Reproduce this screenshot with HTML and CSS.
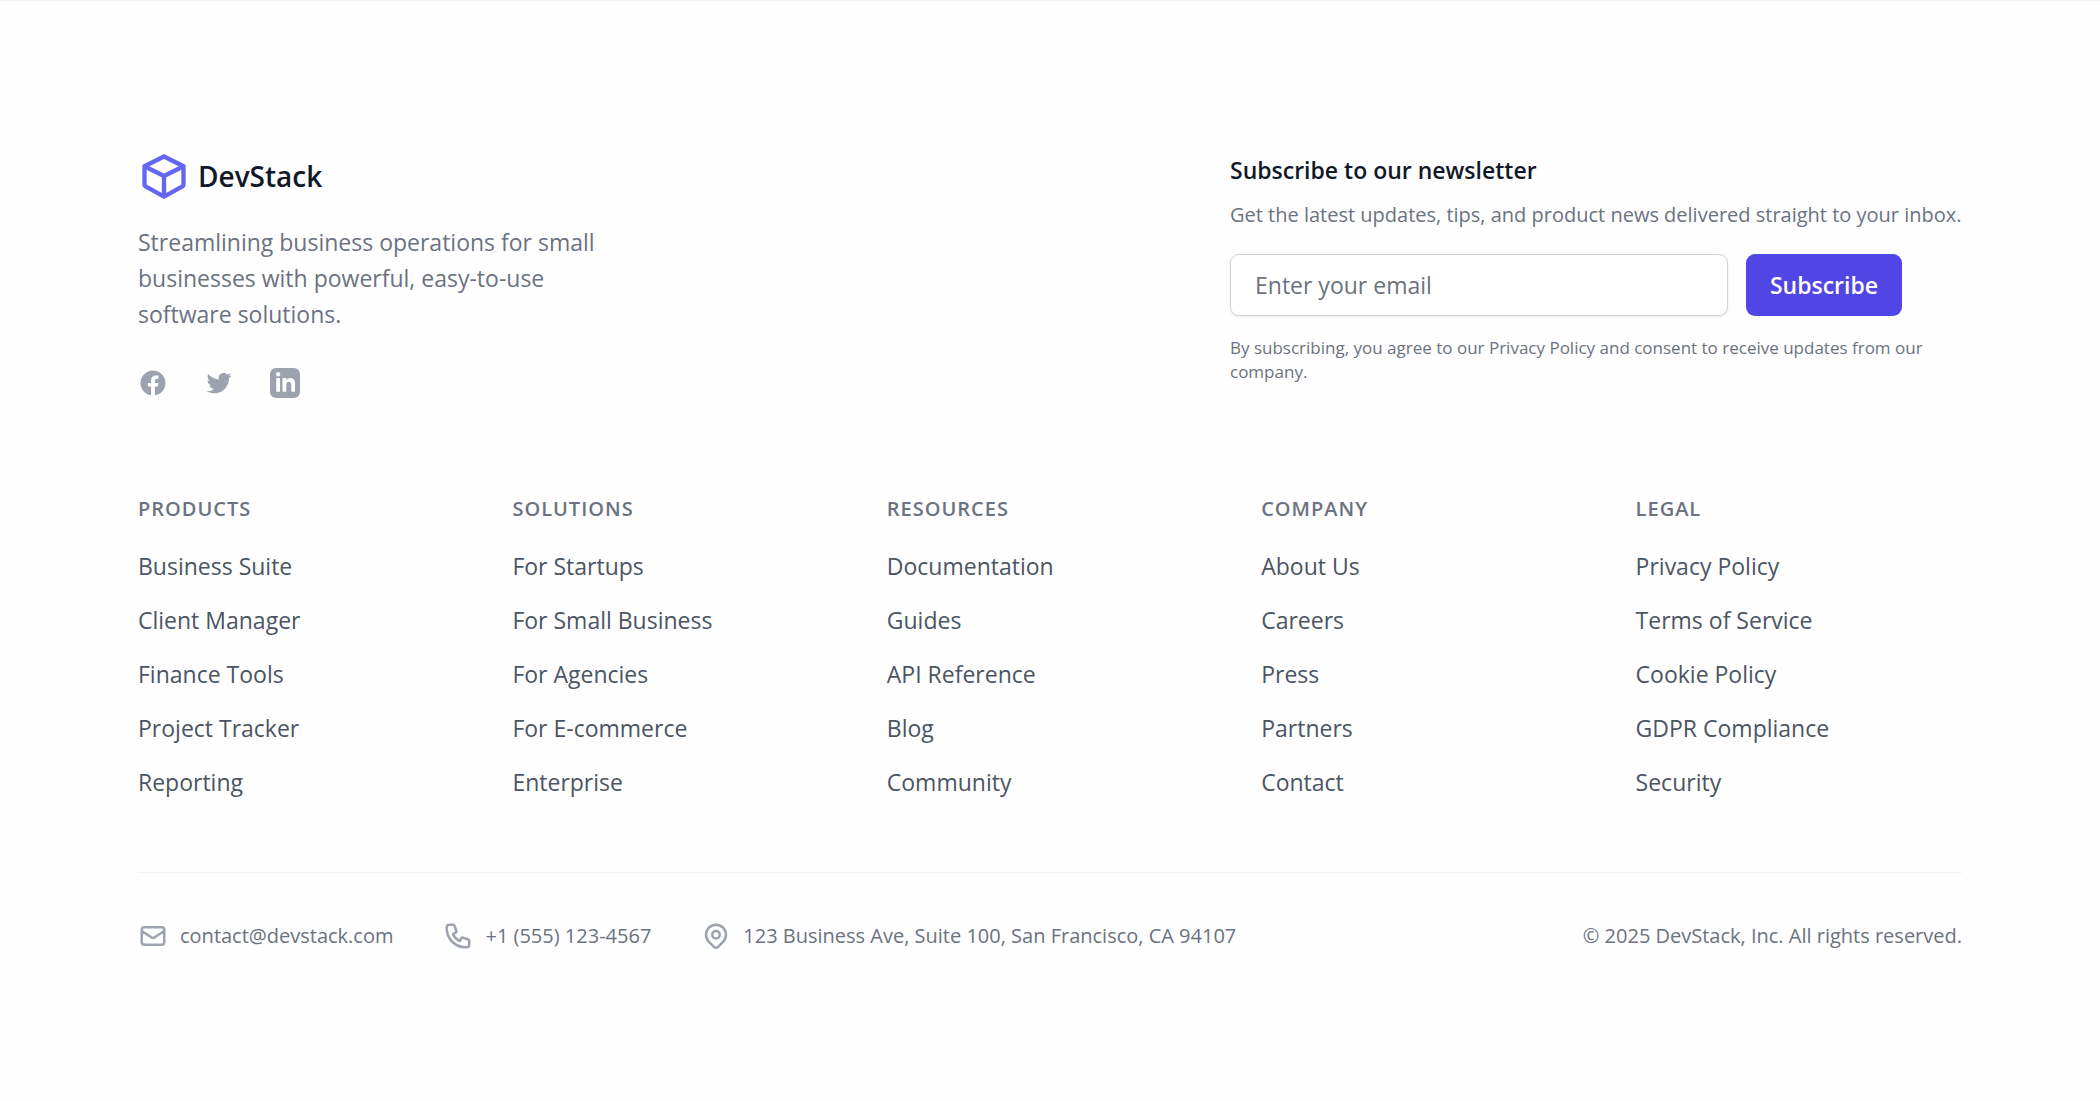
FILE: index.html
```
<!DOCTYPE html>
<html lang="en">
<head>
    <meta charset="UTF-8">
    <meta name="viewport" content="width=device-width, initial-scale=1">
    <title>DevStack</title>
    <link rel="stylesheet" href="styles.css">
</head>
<body>
    <footer class="footer">
        <div class="container">
            <div class="top">
                <div class="brand">
                    <a class="logo" href="#">
                        <svg viewBox="0 0 24 24"><path d="M12 3l9 4.500M12 3L3 7.500M3 7.500l9 4.500 9-4.500M12 12v9.500M3 7.500V16q0 .5.5 .8L12 21.500l8.500-4.700q.5-.3.5-.8V7.500"/></svg>
                        <span>DevStack</span>
                    </a>
                    <p class="about">Streamlining business operations for small businesses with powerful, easy-to-use software solutions.</p>
                    <div class="social">
                        <a href="#" aria-label="Facebook">
                            <svg viewBox="0 0 24 24"><path d="M22 12c0-5.523-4.477-10-10-10S2 6.477 2 12c0 4.991 3.657 9.128 8.438 9.878v-6.987h-2.540V12h2.540V9.797c0-2.506 1.492-3.890 3.777-3.890 1.094 0 2.238.195 2.238.195v2.460h-1.260c-1.243 0-1.630.771-1.630 1.562V12h2.773l-.443 2.890h-2.330v6.988C18.343 21.128 22 16.991 22 12z"/></svg>
                        </a>
                        <a href="#" aria-label="Twitter">
                            <svg viewBox="0 0 24 24"><path d="M8.290 20.251c7.547 0 11.675-6.253 11.675-11.675 0-.178 0-.355-.012-.530A8.348 8.348 0 0022 5.920a8.190 8.190 0 01-2.357.646 4.118 4.118 0 001.804-2.270 8.224 8.224 0 01-2.605.996 4.107 4.107 0 00-6.993 3.743 11.650 11.650 0 01-8.457-4.287 4.106 4.106 0 001.270 5.477A4.072 4.072 0 012.800 9.713v.052a4.105 4.105 0 003.292 4.022 4.095 4.095 0 01-1.853.070 4.108 4.108 0 003.834 2.850A8.233 8.233 0 012 18.407a11.616 11.616 0 006.290 1.840"/></svg>
                        </a>
                        <a href="#" aria-label="LinkedIn">
                            <svg viewBox="0 0 24 24"><path d="M19 0h-14c-2.761 0-5 2.239-5 5v14c0 2.761 2.239 5 5 5h14c2.762 0 5-2.239 5-5v-14c0-2.761-2.238-5-5-5zm-11 19h-3v-11h3v11zm-1.500-12.268c-.966 0-1.750-.790-1.750-1.764s.784-1.764 1.750-1.764 1.750.790 1.750 1.764-.783 1.764-1.750 1.764zm13.500 12.268h-3v-5.604c0-3.368-4-3.113-4 0v5.604h-3v-11h3v1.765c1.396-2.586 7-2.777 7 2.476v6.759z"/></svg>
                        </a>
                    </div>
                </div>
                <form class="newsletter">
                    <h2>Subscribe to our newsletter</h2>
                    <p class="lead">Get the latest updates, tips, and product news delivered straight to your inbox.</p>
                    <div class="field">
                        <input type="email" aria-label="Email address" placeholder="Enter your email">
                        <button type="submit">Subscribe</button>
                    </div>
                    <p class="note">By subscribing, you agree to our Privacy Policy and consent to receive updates from our company.</p>
                </form>
            </div>
            <div class="links">
                <div class="column">
                    <h3>Products</h3>
                    <ul>
                        <li><a href="#">Business Suite</a></li>
                        <li><a href="#">Client Manager</a></li>
                        <li><a href="#">Finance Tools</a></li>
                        <li><a href="#">Project Tracker</a></li>
                        <li><a href="#">Reporting</a></li>
                    </ul>
                </div>
                <div class="column">
                    <h3>Solutions</h3>
                    <ul>
                        <li><a href="#">For Startups</a></li>
                        <li><a href="#">For Small Business</a></li>
                        <li><a href="#">For Agencies</a></li>
                        <li><a href="#">For E-commerce</a></li>
                        <li><a href="#">Enterprise</a></li>
                    </ul>
                </div>
                <div class="column">
                    <h3>Resources</h3>
                    <ul>
                        <li><a href="#">Documentation</a></li>
                        <li><a href="#">Guides</a></li>
                        <li><a href="#">API Reference</a></li>
                        <li><a href="#">Blog</a></li>
                        <li><a href="#">Community</a></li>
                    </ul>
                </div>
                <div class="column">
                    <h3>Company</h3>
                    <ul>
                        <li><a href="#">About Us</a></li>
                        <li><a href="#">Careers</a></li>
                        <li><a href="#">Press</a></li>
                        <li><a href="#">Partners</a></li>
                        <li><a href="#">Contact</a></li>
                    </ul>
                </div>
                <div class="column">
                    <h3>Legal</h3>
                    <ul>
                        <li><a href="#">Privacy Policy</a></li>
                        <li><a href="#">Terms of Service</a></li>
                        <li><a href="#">Cookie Policy</a></li>
                        <li><a href="#">GDPR Compliance</a></li>
                        <li><a href="#">Security</a></li>
                    </ul>
                </div>
            </div>
            <div class="bottom">
                <ul class="contact">
                    <li>
                        <svg viewBox="0 0 24 24"><path d="M3 8l7.890 5.260a2 2 0 002.220 0L21 8M5 19h14a2 2 0 002-2V7a2 2 0 00-2-2H5a2 2 0 00-2 2v10a2 2 0 002 2z"/></svg>
                        <a href="#">contact@devstack.com</a>
                    </li>
                    <li>
                        <svg viewBox="0 0 24 24"><path d="M3 5a2 2 0 012-2h3.280a1 1 0 01.948.684l1.498 4.493a1 1 0 01-.502 1.210l-2.257 1.130a11.042 11.042 0 005.516 5.516l1.130-2.257a1 1 0 011.210-.502l4.493 1.498a1 1 0 01.684.949V19a2 2 0 01-2 2h-1C9.716 21 3 14.284 3 6V5z"/></svg>
                        <a href="#">+1 (555) 123-4567</a>
                    </li>
                    <li>
                        <svg viewBox="0 0 24 24"><path d="M17.657 16.657L13.414 20.900a1.998 1.998 0 01-2.827 0l-4.244-4.243a8 8 0 1111.314 0z"/><path d="M15 11a3 3 0 11-6 0 3 3 0 016 0z"/></svg>
                        <span>123 Business Ave, Suite 100, San Francisco, CA 94107</span>
                    </li>
                </ul>
                <p>© 2025 DevStack, Inc. All rights reserved.</p>
            </div>
        </div>
    </footer>
</body>
</html>
```

FILE: styles.css
```
*{
    margin:0;
    padding:0;
    box-sizing:border-box;
}
body{
    background:#fefefe;
    color:#6b7280;
    font-family:"Open Sans","Noto Sans",sans-serif;
    font-size:23px;
    line-height:36px;
}
ul{
    list-style:none;
}
a{
    color:inherit;
    text-decoration:none;
}
.footer{
    border-top:1px solid #f3f4f6;
}
.container{
    max-width:1920px;
    margin:0 auto;
    padding:145px 48px;
}
.top{
    display:flex;
    flex-wrap:wrap;
    justify-content:space-between;
    gap:48px;
}
.brand{
    flex:0 1 480px;
}
.logo{
    display:flex;
    align-items:center;
    gap:8px;
    color:#111827;
    font-size:28px;
    font-weight:600;
}
.logo svg{
    width:52px;
    height:60px;
    fill:none;
    stroke:#6366f1;
    stroke-width:2;
    stroke-linecap:round;
    stroke-linejoin:round;
}
.about{
    margin-top:18px;
}
.social{
    display:flex;
    gap:36px;
    margin-top:36px;
    color:#9ca3af;
}
.social a{
    display:flex;
}
.social svg{
    width:30px;
    height:30px;
    fill:currentColor;
}
.newsletter{
    flex:0 1 732px;
    padding-top:6px;
}
.newsletter h2{
    color:#111827;
    font-size:23px;
    font-weight:600;
}
.lead{
    margin-top:12px;
    font-size:20px;
    line-height:30px;
}
.field{
    display:flex;
    gap:18px;
    max-width:672px;
    margin-top:24px;
}
.field input,
.field button{
    height:62px;
    border-radius:9px;
    padding:0 24px;
    font:inherit;
}
.field input{
    flex:1;
    min-width:0;
    border:1px solid #d1d5db;
    background:#fff;
    box-shadow:0 1px 2px rgba(0,0,0,0.1);
}
.field input::placeholder{
    color:#6b7280;
    opacity:1;
}
.field button{
    border:0;
    background:#4f46e5;
    color:#fff;
    font-weight:600;
}
.note{
    margin-top:20px;
    font-size:17px;
    line-height:24px;
}
.links{
    display:grid;
    grid-template-columns:repeat(5,1fr);
    gap:48px;
    margin-top:96px;
}
.column h3{
    font-size:20px;
    font-weight:600;
    line-height:30px;
    letter-spacing:1px;
    text-transform:uppercase;
}
.column ul{
    display:grid;
    gap:18px;
    margin-top:24px;
    color:#4b5563;
}
.bottom{
    display:flex;
    flex-wrap:wrap;
    align-items:center;
    justify-content:space-between;
    gap:24px;
    margin-top:72px;
    padding-top:48px;
    border-top:1px solid #f3f4f6;
    font-size:20px;
    line-height:30px;
}
.contact{
    display:flex;
    flex-wrap:wrap;
    gap:50px;
}
.contact li{
    display:flex;
    align-items:center;
    gap:12px;
}
.contact svg{
    width:30px;
    height:30px;
    fill:none;
    stroke:#9ca3af;
    stroke-width:2;
    stroke-linecap:round;
    stroke-linejoin:round;
}

@media (max-width: 1024px) {
    .links{
        grid-template-columns:repeat(2,1fr);
    }
}
```
